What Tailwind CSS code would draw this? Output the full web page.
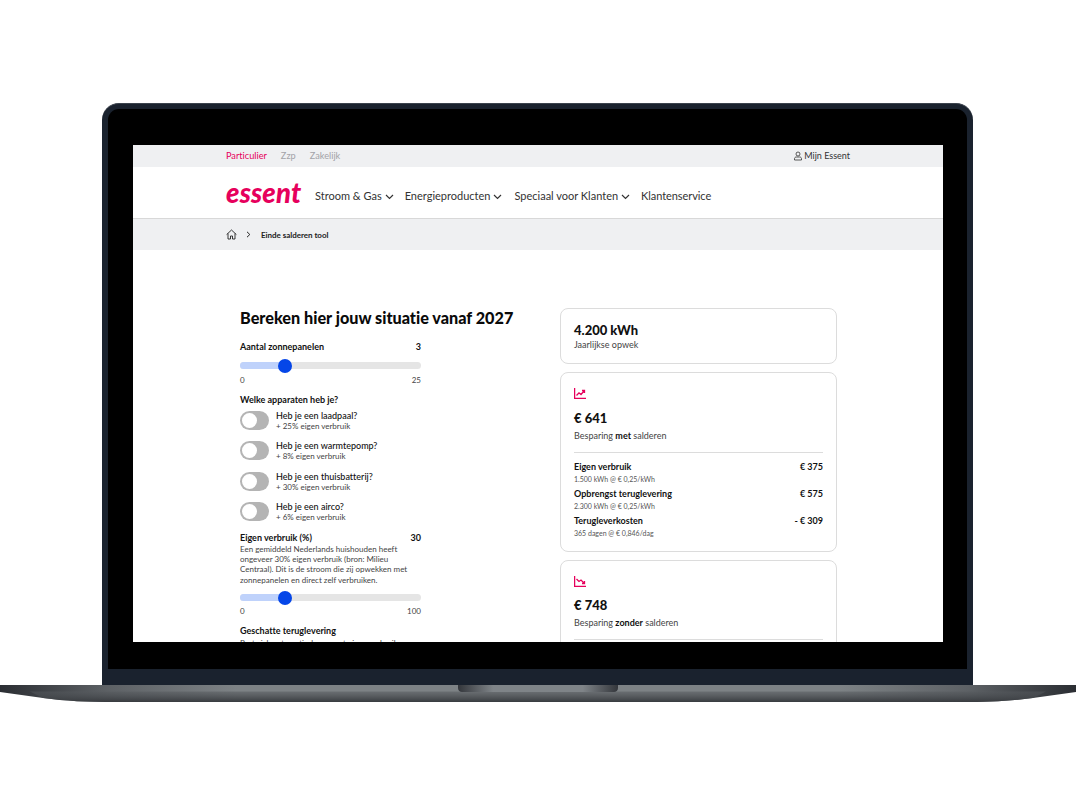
<!DOCTYPE html>
<html lang="nl">
<head>
    <meta charset="UTF-8">
    <title>Einde salderen tool</title>
    <script src="https://cdn.jsdelivr.net/npm/@tailwindcss/browser@4"></script>
</head>
<body class="bg-white font-['Lato','Liberation_Sans',sans-serif] text-[#111] [font-variant-ligatures:none]">
<div class="w-[1076px] h-[807px] overflow-hidden pt-[103px]">
    <!-- lid -->
    <div class="ml-[102px] w-[871px] h-[582px] bg-[#1a222e] rounded-t-[17px] border-t border-[#3c434d] pt-[5px] px-[6px]">
        <div class="h-[560px] bg-black rounded-t-[11px] pt-[36px] pl-[25px]">
            <!-- screen -->
            <div class="w-[810px] h-[497px] bg-white overflow-hidden">
                <div class="h-[22px] bg-[#eff0f2] flex items-center px-[93px] text-[9.2px]">
                    <span class="text-[#e6005c] mr-[14px]">Particulier</span>
                    <span class="text-[#a3a3a8] mr-[14px]">Zzp</span>
                    <span class="text-[#a3a3a8]">Zakelijk</span>
                    <span class="ml-auto flex items-center gap-[1px] text-[9px] text-[#333]">
                        <svg width="10" height="10" viewBox="0 0 10 10" fill="none" stroke="#333" stroke-width="0.8"><circle cx="5" cy="3" r="2"/><path d="M1.500 9h7V7.600c0-.9-.8-1.600-1.700-1.600H3.200c-.9 0-1.700.7-1.700 1.600z"/></svg>
                        Mijn Essent
                    </span>
                </div>
                <div class="h-[52px] border-b border-[#d8d8d8] flex items-center pl-[93px] pt-[8px] text-[11px] text-[#333]">
                    <span class="text-[#e6005c] italic font-black text-[27.5px] leading-none tracking-[0.15px] w-[89px] -mt-[8px]">essent</span>
                    <span class="flex items-center gap-[3px] mr-[11px]">Stroom &amp; Gas <svg width="9" height="6" viewBox="0 0 9 6" fill="none" stroke="#333" stroke-width="1.200"><path d="M1 1l3.500 3.500L8 1"/></svg></span>
                    <span class="flex items-center gap-[3px] mr-[12px]">Energieproducten <svg width="9" height="6" viewBox="0 0 9 6" fill="none" stroke="#333" stroke-width="1.200"><path d="M1 1l3.500 3.500L8 1"/></svg></span>
                    <span class="flex items-center gap-[3px] mr-[11px]">Speciaal voor Klanten <svg width="9" height="6" viewBox="0 0 9 6" fill="none" stroke="#333" stroke-width="1.200"><path d="M1 1l3.500 3.500L8 1"/></svg></span>
                    <span class="tracking-[-0.08px]">Klantenservice</span>
                </div>
                <div class="h-[31px] bg-[#eff0f2] flex items-center pl-[93px] text-[8px] font-bold text-[#222] tracking-[-0.03px]">
                    <svg width="11" height="11" viewBox="0 0 11 11" fill="none" stroke="#222" stroke-width="0.900"><path d="M.6 5.600 5.500 1l4.900 4.600M2 4.500V10h2.500V7h2v3H9V4.500"/></svg>
                    <svg class="ml-[9px] mr-[10px]" width="5" height="7" viewBox="0 0 5 7" fill="none" stroke="#222" stroke-width="1"><path d="M1 .8 3.800 3.500 1 6.200"/></svg>
                    Einde salderen tool
                </div>
                <div class="flex pt-[58px] pl-[107px]">
                    <!-- left column -->
                    <div class="w-[181px] mr-[139px] shrink-0">
                        <h1 class="text-[16.2px] leading-[20px] font-black text-[#0a0a0a] whitespace-nowrap">Bereken hier jouw situatie vanaf 2027</h1>
                        <div class="mt-[13px] flex justify-between text-[9px] leading-[12px] font-bold"><span>Aantal zonnepanelen</span><span>3</span></div>
                        <div class="relative mt-[9px] h-[7px] rounded-full bg-[#e5e5e5]">
                            <div class="h-[7px] w-[45px] rounded-l-full bg-[#bfd2fb]"></div>
                            <div class="absolute left-[38px] -top-[3.500px] size-[14px] rounded-full bg-[#0546e8]"></div>
                        </div>
                        <div class="mt-[6px] flex justify-between text-[8px] leading-[10px] text-[#444]"><span>0</span><span>25</span></div>
                        <div class="mt-[9px] text-[9px] leading-[12px] font-bold">Welke apparaten heb je?</div>
                        <div class="mt-[4px] flex flex-col gap-[10.500px]">
                            <div class="flex items-center gap-[7px] h-[20px]">
                                <div class="w-[29px] h-[19px] rounded-full bg-[#b4b4b4] p-[2px]"><div class="size-[15px] rounded-full bg-white"></div></div>
                                <div><div class="text-[9px] leading-[11px] font-medium">Heb je een laadpaal?</div><div class="text-[8px] leading-[10px] text-[#444]">+ 25% eigen verbruik</div></div>
                            </div>
                            <div class="flex items-center gap-[7px] h-[20px]">
                                <div class="w-[29px] h-[19px] rounded-full bg-[#b4b4b4] p-[2px]"><div class="size-[15px] rounded-full bg-white"></div></div>
                                <div><div class="text-[9px] leading-[11px] font-medium">Heb je een warmtepomp?</div><div class="text-[8px] leading-[10px] text-[#444]">+ 8% eigen verbruik</div></div>
                            </div>
                            <div class="flex items-center gap-[7px] h-[20px]">
                                <div class="w-[29px] h-[19px] rounded-full bg-[#b4b4b4] p-[2px]"><div class="size-[15px] rounded-full bg-white"></div></div>
                                <div><div class="text-[9px] leading-[11px] font-medium">Heb je een thuisbatterij?</div><div class="text-[8px] leading-[10px] text-[#444]">+ 30% eigen verbruik</div></div>
                            </div>
                            <div class="flex items-center gap-[7px] h-[20px]">
                                <div class="w-[29px] h-[19px] rounded-full bg-[#b4b4b4] p-[2px]"><div class="size-[15px] rounded-full bg-white"></div></div>
                                <div><div class="text-[9px] leading-[11px] font-medium">Heb je een airco?</div><div class="text-[8px] leading-[10px] text-[#444]">+ 6% eigen verbruik</div></div>
                            </div>
                        </div>
                        <div class="mt-[10px] flex justify-between text-[9px] leading-[12px] font-bold"><span>Eigen verbruik (%)</span><span>30</span></div>
                        <p class="text-[8px] leading-[10.400px] text-[#444]">Een gemiddeld Nederlands huishouden heeft ongeveer 30% eigen verbruik (bron: Milieu Centraal). Dit is de stroom die zij opwekken met zonnepanelen en direct zelf verbruiken.</p>
                        <div class="relative mt-[9px] h-[7px] rounded-full bg-[#e5e5e5]">
                            <div class="h-[7px] w-[45px] rounded-l-full bg-[#bfd2fb]"></div>
                            <div class="absolute left-[38px] -top-[3.500px] size-[14px] rounded-full bg-[#0546e8]"></div>
                        </div>
                        <div class="mt-[5px] flex justify-between text-[8px] leading-[10px] text-[#444]"><span>0</span><span>100</span></div>
                        <div class="mt-[9px] text-[9px] leading-[12px] font-bold">Geschatte teruglevering</div>
                        <p class="mt-[1px] text-[8px] leading-[10.400px] text-[#444]">Past zich automatisch aan met eigen verbruik</p>
                    </div>
                    <!-- right column -->
                    <div class="w-[277px] shrink-0 flex flex-col gap-[8px]">
                        <div class="h-[56px] rounded-[8px] border border-[#dcdcdc] px-[13px] pt-[13px]">
                            <div class="text-[13px] leading-[16px] font-black">4.200 kWh</div>
                            <div class="mt-[1px] text-[9px] leading-[12px] text-[#444]">Jaarlijkse opwek</div>
                        </div>
                        <div class="h-[180px] rounded-[8px] border border-[#dcdcdc] px-[13px] pt-[15px]">
                            <svg class="block" width="12" height="11" viewBox="0 0 12 11" fill="none" stroke="#e6005c" stroke-width="1.300"><path d="M.6 0v10.300H12"/><path d="M2.500 7.500 5 4.800l2 1.700 3-3.500M8 2.500h2.500V5"/></svg>
                            <div class="mt-[11px] text-[13px] leading-[16px] font-black">€ 641</div>
                            <div class="mt-[4px] text-[9px] leading-[12px] text-[#444]">Besparing <b class="text-[#111]">met</b> salderen</div>
                            <div class="mt-[10px] border-t border-[#dcdcdc] pt-[8px] flex flex-col gap-[3px]">
                                <div>
                                    <div class="flex justify-between text-[9px] leading-[12px] font-bold"><span>Eigen verbruik</span><span>€ 375</span></div>
                                    <div class="text-[7px] leading-[12px] text-[#555]">1.500 kWh @ € 0,25/kWh</div>
                                </div>
                                <div>
                                    <div class="flex justify-between text-[9px] leading-[12px] font-bold"><span>Opbrengst teruglevering</span><span>€ 575</span></div>
                                    <div class="text-[7px] leading-[12px] text-[#555]">2.300 kWh @ € 0,25/kWh</div>
                                </div>
                                <div>
                                    <div class="flex justify-between text-[9px] leading-[12px] font-bold"><span>Terugleverkosten</span><span>- € 309</span></div>
                                    <div class="text-[7px] leading-[12px] text-[#555]">365 dagen @ € 0,846/dag</div>
                                </div>
                            </div>
                        </div>
                        <div class="h-[180px] rounded-[8px] border border-[#dcdcdc] px-[13px] pt-[15px]">
                            <svg class="block" width="12" height="11" viewBox="0 0 12 11" fill="none" stroke="#e6005c" stroke-width="1.300"><path d="M.6 0v10.300H12"/><path d="M2.500 3 5 5.500l2-1.500 3 3M8 7.500h2.500V5"/></svg>
                            <div class="mt-[10px] text-[13px] leading-[16px] font-black">€ 748</div>
                            <div class="mt-[4px] text-[9px] leading-[12px] text-[#444]">Besparing <b class="text-[#111]">zonder</b> salderen</div>
                            <div class="mt-[10px] border-t border-[#dcdcdc]"></div>
                        </div>
                    </div>
                </div>
            </div>
        </div>
    </div>
    <!-- base -->
    <svg class="block" width="1076" height="20" viewBox="0 0 1076 20">
        <defs>
            <linearGradient id="side" x1="0" x2="1" y1="0" y2="0">
                <stop offset="0" stop-color="#2b2e33"/>
                <stop offset="0.1" stop-color="#5d6165"/>
                <stop offset="0.22" stop-color="#7d8285"/>
                <stop offset="0.78" stop-color="#7d8285"/>
                <stop offset="0.9" stop-color="#5d6165"/>
                <stop offset="1" stop-color="#2b2e33"/>
            </linearGradient>
            <linearGradient id="low" x1="0" x2="0" y1="0" y2="1">
                <stop offset="0" stop-color="#55595d" stop-opacity="0.5"/>
                <stop offset="1" stop-color="#383b3f"/>
            </linearGradient>
            <linearGradient id="notch" x1="0" x2="1" y1="0" y2="0">
                <stop offset="0" stop-color="#33363b"/>
                <stop offset="0.22" stop-color="#7f8488"/>
                <stop offset="0.78" stop-color="#7f8488"/>
                <stop offset="1" stop-color="#33363b"/>
            </linearGradient>
        </defs>
        <path d="M0 0H1076V7L1033 13C1010 16 990 17 960 17H116C86 17 66 16 43 13L0 7Z" fill="url(#side)"/>
        <path d="M30 6.500H1046L1033 13C1010 16 990 17 960 17H116C86 17 66 16 43 13Z" fill="url(#low)"/>
        <path d="M458 0H618V3C618 5.500 616 7 614 7H462C460 7 458 5.500 458 3Z" fill="url(#notch)"/>
    </svg>
</div>
</body>
</html>
